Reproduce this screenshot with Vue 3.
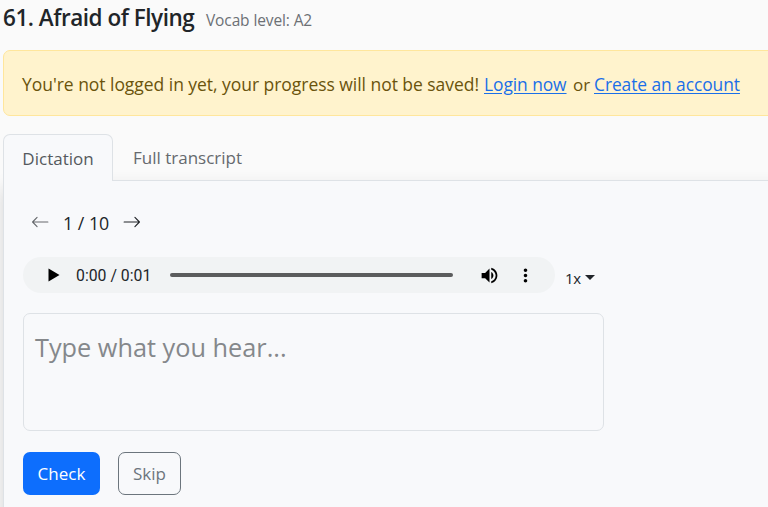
<script setup>
import { ref } from 'vue'

const tabs = ['Dictation', 'Full transcript']
const activeTab = ref('Dictation')
const position = ref(1)
const total = 10
const answer = ref('')
</script>

<template>
    <main class="page">
        <header class="heading">
            <h1>61. Afraid of Flying</h1>
            <span class="level">Vocab level: A2</span>
        </header>

        <div class="alert">
            <span class="message">You're not logged in yet, your progress will not be saved!</span>
            <span class="login"><a href="#">Login now</a></span>
            <span class="or">or</span>
            <a href="#" class="create">Create an account</a>
        </div>

        <nav class="tabs">
            <button v-for="tab in tabs" :key="tab" class="tab" :class="{ active: tab === activeTab }" @click="activeTab = tab">{{ tab }}</button>
        </nav>

        <section class="card">
            <div class="pager">
                <button class="arrow muted" @click="position = Math.max(1, position - 1)">
                    <svg width="18" height="18" viewBox="0 0 16 16"><path d="M15 8H1.7M5.4 3.9L1.4 8l4 4.1" /></svg>
                </button>
                <span class="count">{{ position }} / {{ total }}</span>
                <button class="arrow" @click="position = Math.min(total, position + 1)">
                    <svg width="18" height="18" viewBox="0 0 16 16"><path d="M1 8h13.3M10.6 3.9l4 4.1-4 4.1" /></svg>
                </button>
            </div>

            <div class="audio">
                <div class="player">
                    <svg class="play" width="12" height="14" viewBox="0 0 12 14"><path d="M0.5 0.5v13L11.5 7z" /></svg>
                    <span class="time">0:00 / 0:01</span>
                    <div class="track"></div>
                    <svg class="volume" width="24" height="24" viewBox="0 0 24 24"><path d="M3 9v6h4l5 5V4L7 9H3zm13.5 3c0-1.77-1.02-3.29-2.5-4.03v8.05c1.48-.73 2.5-2.25 2.5-4.02zM14 3.23v2.06c2.89.86 5 3.54 5 6.71s-2.11 5.85-5 6.71v2.06c4.01-.91 7-4.49 7-8.77s-2.99-7.86-7-8.77z" /></svg>
                    <svg class="more" width="24" height="24" viewBox="0 0 24 24"><path d="M12 8c1.1 0 2-.9 2-2s-.9-2-2-2-2 .9-2 2 .9 2 2 2zm0 2c-1.1 0-2 .9-2 2s.9 2 2 2 2-.9 2-2-.9-2-2-2zm0 6c-1.1 0-2 .9-2 2s.9 2 2 2 2-.9 2-2-.9-2-2-2z" /></svg>
                </div>
                <button class="speed">1x<span class="caret"></span></button>
            </div>

            <textarea v-model="answer" placeholder="Type what you hear..."></textarea>

            <div class="actions">
                <button class="btn primary">Check</button>
                <button class="btn outline">Skip</button>
            </div>
        </section>
    </main>
</template>

<style>
body {
    background: #fafafa;
    overflow: hidden;
}
</style>

<style scoped>
* {
    box-sizing: border-box;
}
.page {
    width: 790px;
    height: 507px;
    padding-left: 3px;
    overflow: hidden;
    font-family: "Segoe UI", "Open Sans", "Noto Sans", sans-serif;
    font-size: 17px;
    color: #212529;
    white-space: nowrap;
}
button {
    padding: 0;
    border: 0;
    background: none;
    font: inherit;
    color: inherit;
    letter-spacing: inherit;
}
.heading {
    display: flex;
    align-items: baseline;
    height: 50px;
    padding-top: 2px;
}
h1 {
    width: 203px;
    margin: 0;
    font-size: 22.5px;
    font-weight: 600;
    line-height: 32px;
    letter-spacing: -0.47px;
}
.level {
    font-size: 15.5px;
    color: #6c7075;
    letter-spacing: -0.12px;
}
.alert {
    display: flex;
    align-items: baseline;
    height: 66px;
    padding: 21px 0 0 18px;
    border: 1px solid #ffe69c;
    border-radius: 7px;
    background: #fff3cd;
    color: #6a530c;
}
.message {
    width: 462px;
    font-size: 17.5px;
    letter-spacing: -0.04px;
}
.alert a {
    color: #1a6fe8;
    font-size: 17.4px;
    letter-spacing: -0.07px;
    text-underline-offset: 2px;
}
.login {
    width: 89px;
}
.or {
    width: 21px;
}
.tabs {
    position: relative;
    z-index: 1;
    display: flex;
    height: 47px;
    margin-top: 18px;
}
.tab {
    height: 47px;
    padding: 0 19px;
    border: 1px solid transparent;
    border-radius: 7px 7px 0 0;
    color: #65696e;
}
.tab.active {
    width: 110px;
    padding: 0 18px;
    border-color: #dee2e6;
    border-bottom: 0;
    background: #f8f9fb;
    color: #55595e;
}
.card {
    height: 400px;
    margin-top: -1px;
    padding: 28px 18px 0 19px;
    border: 1px solid #dee2e6;
    background: #f8f9fb;
    box-shadow: 0 8px 16px rgba(0, 0, 0, 0.15);
}
.pager {
    display: flex;
    align-items: center;
    height: 28px;
    padding-left: 8px;
}
.arrow {
    display: flex;
    margin-bottom: 2px;
}
.arrow path {
    fill: none;
    stroke: #212529;
    stroke-width: 1;
    stroke-linecap: round;
    stroke-linejoin: round;
}
.arrow.muted path {
    stroke: #66696d;
}
.count {
    width: 74px;
    padding-left: 14px;
    font-size: 17.8px;
}
.audio {
    display: flex;
    height: 36px;
    margin-top: 20px;
}
.player {
    display: flex;
    align-items: center;
    width: 532px;
    height: 36px;
    padding-left: 25px;
    border-radius: 18px;
    background: #f1f3f4;
}
.time {
    width: 110px;
    padding-left: 16px;
    font-family: Roboto, sans-serif;
    font-size: 15.8px;
}
.track {
    width: 283px;
    height: 4px;
    border-radius: 2px;
    background: #5b5c5d;
}
.volume {
    width: 21px;
    height: 21px;
    margin-left: 26px;
}
.more {
    width: 21px;
    height: 21px;
    margin-left: 15px;
}
.speed {
    display: flex;
    align-items: center;
    padding: 5px 0 0 10px;
    font-size: 15px;
    letter-spacing: -0.3px;
}
.caret {
    margin-left: 4px;
    border-top: 5px solid #212529;
    border-left: 5px solid transparent;
    border-right: 5px solid transparent;
}
textarea {
    display: block;
    width: 581px;
    height: 118px;
    margin-top: 20px;
    padding: 14px 11px;
    border: 1px solid #dee2e6;
    border-radius: 7px;
    outline: 0;
    resize: none;
    background: transparent;
    font: inherit;
    font-size: 25.3px;
    line-height: 38px;
}
textarea::placeholder {
    color: #85888b;
    opacity: 1;
}
.actions {
    display: flex;
    gap: 18px;
    margin-top: 21px;
}
.btn {
    height: 43px;
    border-radius: 7px;
}
.primary {
    width: 77px;
    background: #0d6efd;
    color: #fff;
}
.outline {
    width: 63px;
    border: 1px solid #6c757d;
    color: #6c757d;
}
</style>
